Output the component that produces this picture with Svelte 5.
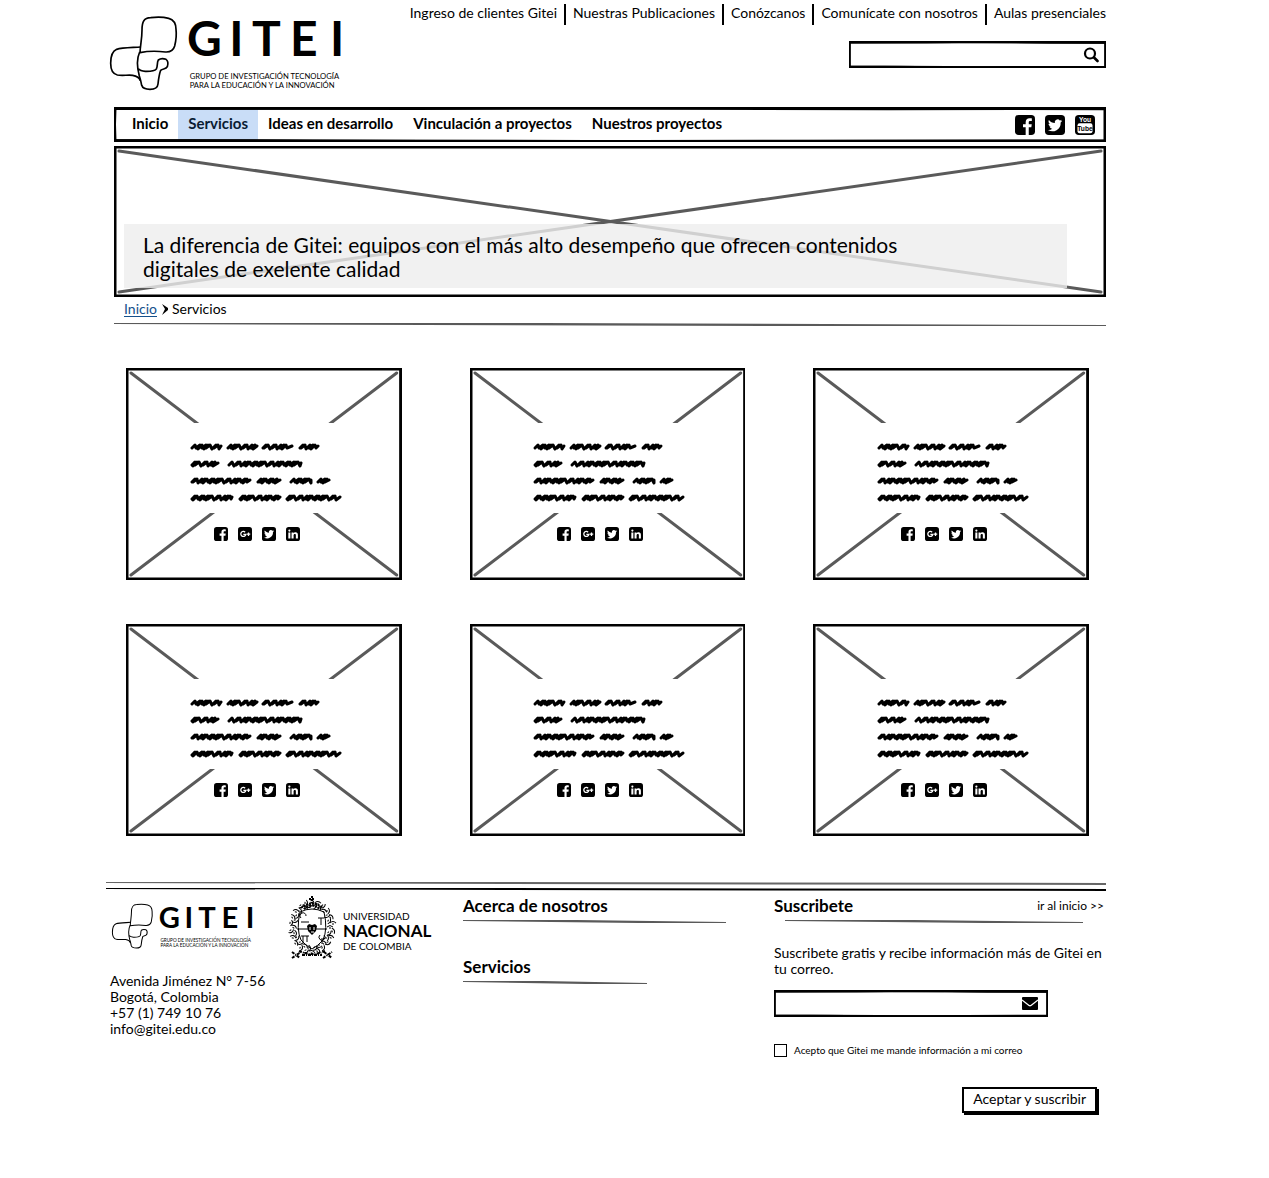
<script>
  const topLinks = [
    'Ingreso de clientes Gitei',
    'Nuestras Publicaciones',
    'Conózcanos',
    'Comunícate con nosotros',
    'Aulas presenciales',
  ];
  const sections = [
    'Inicio',
    'Servicios',
    'Ideas en desarrollo',
    'Vinculación a proyectos',
    'Nuestros proyectos',
  ];
  const cards = [1, 2, 3, 4, 5, 6];

  // Scribbled words: one row per line, each word as [start, end]
  const scribbleRows = [
    [[2, 31], [38, 67], [73, 102], [110, 128]],
    [[2, 28], [39, 111]],
    [[2, 60], [68, 90], [101, 121], [128, 139]],
    [[2, 42], [50, 90], [97, 150]],
  ];
  const strides = [5, 2, 4, 2, 2, 6, 2, 5, 3, 2];

  function scribble(x0, x1, y, seed) {
    let d = `M${x0} ${y + 1}`;
    let x = x0;
    let i = seed;
    while (x < x1 - 4) {
      const s = strides[i % strides.length];
      d += `L${x + 3} ${y - 2}L${x + s - 1} ${y + 1 + (i % 2)}`;
      x += s;
      i += 1;
    }
    return d + `L${x1} ${y - 1}`;
  }
  const scribblePath = scribbleRows
    .map((row, r) => row.map(([a, b], w) => scribble(a, b, 6 + r * 17, r * 3 + w * 2)).join(''))
    .join('');

  // Leaves around the university crest
  const leaves = Array.from({ length: 44 }, (_, i) => {
    const a = (i / 44) * Math.PI * 2;
    const r = i % 2 ? 1 : 0.84;
    return {
      x: Math.round(25 + Math.cos(a) * 21 * r),
      y: Math.round(33 + Math.sin(a) * 25 * r),
      turn: (i * 67) % 180,
    };
  });
</script>

{#snippet frame()}
  <svg class="frame" viewBox="0 0 1000 100" preserveAspectRatio="none" aria-hidden="true">
    <path d="M0 3L300 4L640 2L1000 5V97L700 98L400 99L1 96Z" />
    <path d="M1 4L420 2L780 5L999 4V98L560 99L200 97L0 96Z" />
  </svg>
{/snippet}

{#snippet crossed()}
  <svg class="frame plain" viewBox="0 0 1000 1000" preserveAspectRatio="none" aria-hidden="true">
    <path d="M0 0H1000V1000H0Z" />
  </svg>
  <svg class="cross" viewBox="0 0 100 100" preserveAspectRatio="none" aria-hidden="true">
    <path d="M0 0L100 100M100 0L0 100" />
  </svg>
{/snippet}

{#snippet rule()}
  <svg class="rule" viewBox="0 0 300 3" preserveAspectRatio="none" aria-hidden="true">
    <path d="M0 0H130L300 2V3H200L0 1Z" />
  </svg>
{/snippet}

{#snippet gitei()}
  <svg class="gitei" viewBox="30 48 696 222" role="img" aria-label="Gitei">
    <g fill="none" stroke="#000" stroke-width="5" stroke-linejoin="round">
      <path d="M126 90C126 64 132 54 152 53C170 51 190 51 206 55C224 60 228 72 228 88C230 104 228 122 224 138C220 152 210 157 196 156C174 153 148 152 120 158C121 134 126 116 126 90Z" />
      <path d="M122 141C96 143 66 143 50 148C36 154 32 168 32 190C32 210 38 222 52 225C68 228 84 224 98 226C110 228 118 232 121 242" />
      <path d="M119 156C110 176 112 206 118 228C122 240 124 250 125 256C128 266 138 268 150 268C164 268 173 264 174 252C176 234 178 222 182 211C188 205 198 209 202 200C205 190 204 182 198 178C190 175 180 176 175 180C170 188 174 198 169 207C162 215 146 214 136 214C126 213 119 211 115 206" />
    </g>
    <text class="mark" y="167" x="261 388 456 570 690">GITEI</text>
    <text class="tag" x="269" y="238">GRUPO DE INVESTIGACIÓN TECNOLOGÍA</text>
    <text class="tag" x="269" y="264">PARA LA EDUCACIÓN Y LA INNOVACIÓN</text>
  </svg>
{/snippet}

{#snippet icon(name)}
  <svg class="icon" viewBox="0 0 24 24" aria-hidden="true">
    <rect width="24" height="24" rx="4.500" />
    {#if name === 'Facebook'}
      <path fill="#fff" d="M16.500 24v-9.200h3.100l.5-3.600h-3.600V9c0-1 .3-1.700 1.800-1.700h1.900V4.100c-.3 0-1.500-.1-2.800-.1-2.700 0-4.600 1.600-4.600 4.700v2.500H9.600v3.600h3.200V24z" />
    {:else if name === 'Twitter'}
      <path fill="#fff" d="M20.500 7c-.6.3-1.300.5-2 .6.700-.4 1.300-1.100 1.500-1.900-.7.4-1.400.7-2.200.8a3.500 3.500 0 0 0-6 3.200C8.900 9.600 6.400 8.200 4.700 6.100c-.9 1.600-.5 3.600 1.100 4.700-.6 0-1.100-.2-1.600-.4 0 1.700 1.200 3.100 2.800 3.500-.5.100-1 .1-1.600 0 .4 1.400 1.700 2.400 3.300 2.500A7 7 0 0 1 3.500 17.900a9.900 9.900 0 0 0 15.300-8.900c.7-.5 1.300-1.200 1.700-2z" />
    {:else if name === 'Google+'}
      <path fill="none" stroke="#fff" stroke-width="2.200" d="M12.200 8.900A4.300 4.300 0 1 0 13.400 12.500H9.200M18 9.300v6M15 12.300h6" />
    {:else if name === 'LinkedIn'}
      <path fill="#fff" d="M4 9.300h3.500v10.500H4zM5.800 4.200a1.900 1.900 0 1 1 0 3.800a1.900 1.900 0 0 1 0-3.800zM9.500 9.300H13v1.500c.6-1 1.700-1.800 3.400-1.800 2.800 0 4 1.800 4 4.700v6.100h-3.500v-5.600c0-1.500-.5-2.400-1.800-2.400-1.400 0-2.100 1-2.100 2.500v5.500H9.500z" />
    {:else}
      <rect x="3" y="10" width="18" height="12" rx="2.500" fill="#fff" />
      <text class="tube" x="12" y="8" fill="#fff">You</text>
      <text class="tube" x="12" y="19">Tube</text>
    {/if}
  </svg>
{/snippet}

<div class="page">
  <header class="top">
    <a class="brand" href="#inicio">{@render gitei()}</a>
    <div class="tools">
      <nav class="links" aria-label="Accesos">
        {#each topLinks as label}
          <a href="#{label}">{label}</a>
        {/each}
      </nav>
      <form class="field search" role="search">
        {@render frame()}
        <input type="search" aria-label="Buscar" />
        <button type="submit" class="bare" aria-label="Buscar">
          <svg viewBox="0 0 16 16" width="16" height="16" aria-hidden="true">
            <circle cx="7" cy="6.500" r="5" fill="none" stroke="#000" stroke-width="2.200" />
            <path d="M11 10.500L14.500 14" stroke="#000" stroke-width="2.600" stroke-linecap="round" />
          </svg>
        </button>
      </form>
    </div>
  </header>

  <nav class="menu" aria-label="Principal">
    {@render frame()}
    {#each sections as label}
      <a href="#{label}" class:active={label === 'Servicios'}>{label}</a>
    {/each}
    <div class="social">
      {#each ['Facebook', 'Twitter', 'YouTube'] as name}
        <a href="#{name}" aria-label={name}>{@render icon(name)}</a>
      {/each}
    </div>
  </nav>

  <section class="hero">
    {@render crossed()}
    <h1>La diferencia de Gitei: equipos con el más alto desempeño que ofrecen contenidos digitales de exelente calidad</h1>
  </section>

  <nav class="crumbs" aria-label="Ruta">
    <a href="#inicio">Inicio</a>
    <svg viewBox="0 0 8 12" width="8" height="12" aria-hidden="true">
      <path d="M1 1L7 5V7L1 12L4 6Z" />
    </svg>
    <span>Servicios</span>
  </nav>
  <div class="divider">{@render rule()}</div>

  <main class="cards">
    {#each cards as card (card)}
      <article class="card">
        {@render crossed()}
        <div class="blurb">
          <svg viewBox="0 0 152 62" role="img" aria-label="Descripción del servicio">
            <path d={scribblePath} />
          </svg>
        </div>
        <div class="share">
          {#each ['Facebook', 'Google+', 'Twitter', 'LinkedIn'] as name}
            <a href="#{name}" aria-label={name}>{@render icon(name)}</a>
          {/each}
        </div>
      </article>
    {/each}
  </main>

  <footer>
    <svg class="double" viewBox="0 0 1000 8" preserveAspectRatio="none" aria-hidden="true">
      <path fill="#666" d="M0 0L400 0L1000 1V3L400 2L0 1Z" />
      <path d="M0 6L400 6L1000 7V9L400 8L0 7Z" />
    </svg>
    <div class="columns">
      <div class="about">
        <div class="logos">
          {@render gitei()}
          <div class="unal">
            <svg viewBox="0 2 50 66" width="50" height="66" aria-hidden="true">
              <g fill="none" stroke="#000">
                <path d="M13 18Q25 12 37 18Q41 35 36 46Q31 52 25 55Q19 52 14 46Q9 35 13 18Z" />
                <path d="M10 35H40M19 22a3 3 0 1 0-5 2M14 28h8M14 42h8M16 42v6M20 42v6M31 24h6M34 24v7M33 41a3 3 0 1 0 4 0M35 44v6" />
                <path stroke-width="2" stroke-dasharray="2 1" d="M14 14Q25 5 36 14M17 15Q25 8 33 15M25 2V9M22 5H28" />
                {#each leaves as leaf}
                  <path transform="rotate({leaf.turn} {leaf.x} {leaf.y})" d="M{leaf.x - 3} {leaf.y}q3 -3 6 0M{leaf.x - 1} {leaf.y + 1}h2" />
                {/each}
                <path stroke-width="2" stroke-dasharray="3 1 1 1" d="M5 58l8 6M5 64l9-6M15 61h20M37 58l8 6M36 64l9-6M12 57q13 6 26 0" />
              </g>
              <path d="M20 32l2-2 3 1 3-1 2 2-1 5-4 4-4-4z" />
              <path stroke="#fff" stroke-width="1" d="M23 33v3M27 33v3M24 38h3" />
            </svg>
            <p><span>UNIVERSIDAD</span><strong>NACIONAL</strong><span>DE COLOMBIA</span></p>
          </div>
        </div>
        <address>
          Avenida Jiménez N° 7-56<br />Bogotá, Colombia<br />+57 (1) 749 10 76<br />info@gitei.edu.co
        </address>
      </div>

      <div class="topics">
        <section>
          <h2>Acerca de nosotros</h2>
          {@render rule()}
        </section>
        <section class="short">
          <h2>Servicios</h2>
          {@render rule()}
        </section>
      </div>

      <form class="subscribe">
        <div class="heading">
          <h2>Suscribete</h2>
          <a href="#inicio">ir al inicio &gt;&gt;</a>
        </div>
        <div class="underline">{@render rule()}</div>
        <p>Suscribete gratis y recibe información más de Gitei en tu correo.</p>
        <div class="field mail">
          {@render frame()}
          <input type="email" aria-label="Correo" />
          <svg viewBox="0 0 16 13" width="16" height="13" aria-hidden="true">
            <rect width="16" height="13" rx="1" />
            <path fill="none" stroke="#fff" stroke-width="1.300" d="M0 3L7 8.500Q8 9 9 8.500L16 3" />
          </svg>
        </div>
        <label><input type="checkbox" />Acepto que Gitei me mande información a mi correo</label>
        <button type="submit" class="send">Aceptar y suscribir</button>
      </form>
    </div>
  </footer>
</div>

<style>
  :global(body) {
    background: #fff;
  }
  .page {
    padding: 0 163px 0 106px;
    color: #000;
    font: 14px/16px Lato, 'Open Sans', sans-serif;
  }
  .page :global(*) {
    box-sizing: border-box;
  }
  a {
    color: inherit;
    text-decoration: none;
  }
  h1,
  h2,
  p {
    margin: 0;
  }
  h2 {
    font-size: 17px;
    line-height: 20px;
  }
  input,
  button {
    font: inherit;
    color: inherit;
  }
  svg {
    display: block;
  }

  .frame,
  .cross {
    position: absolute;
    inset: 0;
    width: 100%;
    height: 100%;
    pointer-events: none;
  }
  .frame path {
    fill: none;
    stroke: #000;
    stroke-width: 3px;
    vector-effect: non-scaling-stroke;
  }
  .plain path {
    stroke-width: 5px;
  }
  .cross {
    inset: 5px;
    width: calc(100% - 10px);
    height: calc(100% - 10px);
    overflow: visible;
  }
  .cross path {
    fill: none;
    stroke: #5a5a5a;
    stroke-width: 3px;
    stroke-linecap: round;
    vector-effect: non-scaling-stroke;
  }
  .rule {
    width: 100%;
    height: 3px;
    fill: #5a5a5a;
  }

  .gitei {
    width: 100%;
    overflow: visible;
  }
  .mark {
    font: 700 144px Lato, sans-serif;
  }
  .tag {
    font: 23px Lato, sans-serif;
  }
  .icon {
    width: 100%;
  }
  .tube {
    font: 700 8px 'Liberation Sans', sans-serif;
    text-anchor: middle;
  }

  .top {
    display: flex;
    justify-content: space-between;
    height: 107px;
  }
  .brand {
    width: 232px;
    margin: 16px 0 0 4px;
  }
  .tools {
    display: flex;
    flex-direction: column;
    align-items: flex-end;
    gap: 16px;
    padding-top: 4px;
  }
  .links {
    display: flex;
  }
  .links a {
    padding: 1px 7px 4px;
    white-space: nowrap;
  }
  .links a + a {
    border-left: 2px solid #000;
  }
  .links a:last-child {
    padding-right: 0;
  }
  .field {
    position: relative;
    display: flex;
    align-items: center;
    height: 27px;
    padding: 3px 7px 3px 4px;
  }
  .field input {
    flex: 1;
    min-width: 0;
    height: 100%;
    border: 0;
    background: none;
    outline: none;
  }
  .search {
    width: 257px;
  }
  .bare {
    padding: 0;
    border: 0;
    background: none;
  }

  .menu {
    position: relative;
    display: flex;
    height: 35px;
    margin-left: 8px;
    padding-left: 8px;
    font-size: 15px;
    font-weight: 700;
    line-height: 17px;
  }
  .menu > a {
    padding: 8px 10px 10px;
    white-space: nowrap;
  }
  .menu .active {
    background: #c9ddf7;
    color: #0a1c33;
  }
  .social {
    display: flex;
    align-items: center;
    gap: 10px;
    margin-left: auto;
    padding-right: 11px;
  }
  .social a {
    width: 20px;
  }

  .hero {
    position: relative;
    height: 151px;
    margin: 4px 0 0 8px;
    padding: 78px 39px 0 10px;
  }
  h1 {
    position: relative;
    padding: 9px 130px 7px 19px;
    background: rgba(238, 238, 238, 0.8);
    font-size: 21px;
    font-weight: 400;
    line-height: 24px;
  }
  .crumbs {
    display: flex;
    align-items: center;
    gap: 3px;
    padding: 4px 0 0 18px;
  }
  .crumbs a {
    margin-right: 1px;
    border-bottom: 1px solid #14508c;
    color: #14508c;
    line-height: 15px;
  }
  .divider {
    padding: 6px 0 0 8px;
  }

  .cards {
    display: grid;
    grid-template-columns: repeat(3, 1fr);
    gap: 44px 68px;
    padding: 42px 17px 0 20px;
  }
  .card {
    position: relative;
    display: flex;
    flex-direction: column;
    align-items: center;
    height: 212px;
    padding-top: 55px;
  }
  .blurb {
    position: relative;
    width: 164px;
    height: 90px;
    padding: 18px 4px 0 8px;
    background: #fff;
  }
  .blurb svg {
    width: 152px;
    height: 62px;
    overflow: visible;
  }
  .blurb path {
    fill: none;
    stroke: #000;
    stroke-width: 3px;
    stroke-linecap: round;
    stroke-linejoin: round;
  }
  .share {
    position: relative;
    display: flex;
    gap: 10px;
    padding: 14px 14px 0 0;
  }
  .share a {
    width: 14px;
  }

  footer {
    padding-top: 46px;
  }
  .double {
    width: 100%;
    height: 8px;
    overflow: visible;
  }
  .columns {
    display: grid;
    grid-template-columns: 353fr 311fr 332fr;
    padding: 6px 0 64px 4px;
  }
  .logos {
    display: flex;
    height: 77px;
    gap: 34px;
  }
  .logos > .gitei {
    width: 141px;
    height: 46px;
    margin: 7px 0 0 2px;
  }
  .unal {
    display: flex;
    align-items: flex-start;
    gap: 6px;
  }
  .unal p {
    display: flex;
    flex-direction: column;
    padding-top: 14px;
    font: 10px/12px Lato, sans-serif;
  }
  .unal strong {
    font-size: 17px;
    line-height: 18px;
  }
  address {
    font-style: normal;
  }
  .topics {
    display: grid;
    align-content: start;
    gap: 34px;
    padding-right: 48px;
  }
  .topics .rule,
  .underline {
    margin-top: 4px;
  }
  .short .rule {
    width: 70%;
  }
  .subscribe {
    display: flex;
    flex-direction: column;
    align-items: flex-start;
  }
  .heading {
    display: flex;
    align-items: center;
    justify-content: space-between;
    width: 100%;
    padding-right: 2px;
    font-size: 12px;
  }
  .underline {
    width: 100%;
    padding: 0 23px 0 11px;
  }
  .subscribe p {
    padding-top: 22px;
  }
  .mail {
    width: 274px;
    margin-top: 13px;
    padding-right: 10px;
  }
  label {
    display: flex;
    align-items: center;
    gap: 7px;
    margin-top: 25px;
    font-size: 10px;
  }
  label input {
    appearance: none;
    width: 13px;
    height: 13px;
    margin: 0;
    border: 1px solid #000;
    background: #fff;
  }
  label input:checked {
    background: #000;
  }
  .send {
    align-self: flex-end;
    margin: 29px 9px 0 0;
    padding: 2px 9px 4px;
    border: 2px solid #000;
    background: #fff;
    box-shadow: 2px 2px 0 #000;
  }
</style>
